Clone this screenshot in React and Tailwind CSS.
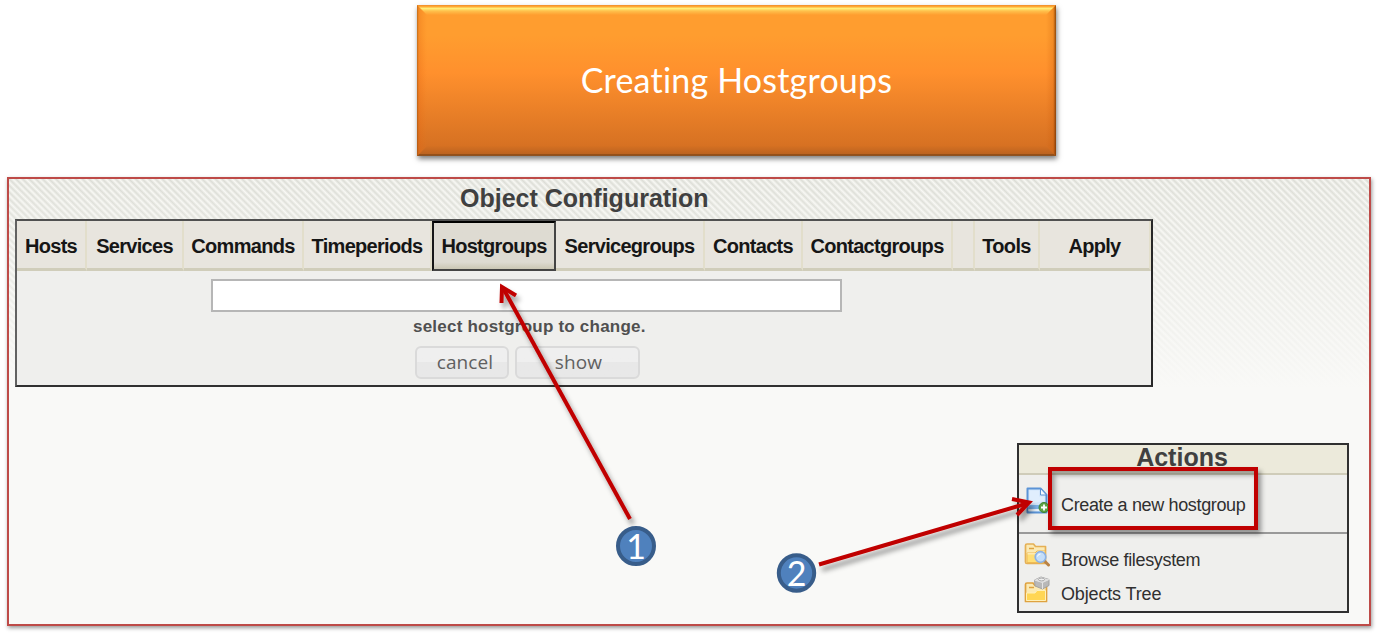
const tabs = [
  { label: 'Hosts', className: 'w-[70px]' },
  { label: 'Services', className: 'w-[97px]' },
  { label: 'Commands', className: 'w-[120px]' },
  { label: 'Timeperiods', className: 'w-[128px]' },
  { label: 'Hostgroups', className: 'w-[124px]', active: true },
  { label: 'Servicegroups', className: 'w-[149px]' },
  { label: 'Contacts', className: 'w-[98px]' },
  { label: 'Contactgroups', className: 'w-[150px]' },
  { label: '', className: 'w-[22px]' },
  { label: 'Tools', className: 'w-[65px]' },
  { label: 'Apply', className: 'w-[111px]' },
];

function Banner() {
  return (
    <div className="relative ml-[417px] h-[151px] w-[639px] bg-linear-to-b from-[#ff9d2f] from-20% via-[#ff902d] via-45% to-[#d57022] to-95% shadow-[1px_3px_5px_rgba(0,0,0,0.5)]">
      {/* bevelled edges */}
      <svg className="absolute inset-0" width="639" height="151">
        <defs>
          <linearGradient id="top" x1="0" y1="0" x2="0" y2="1">
            <stop offset="0" stopColor="#ee8a2a" />
            <stop offset="0.15" stopColor="#ffa834" />
            <stop offset="0.35" stopColor="#ffed78" />
            <stop offset="0.6" stopColor="#ffc04c" />
            <stop offset="1" stopColor="#ff9d2f" />
          </linearGradient>
          <linearGradient id="bottom" x1="0" y1="0" x2="0" y2="1">
            <stop offset="0" stopColor="#d57022" />
            <stop offset="0.75" stopColor="#bd6420" />
            <stop offset="0.9" stopColor="#814514" />
            <stop offset="1" stopColor="#9a6030" />
          </linearGradient>
          <linearGradient id="left">
            <stop offset="0" stopColor="#8a4200" stopOpacity="0.55" />
            <stop offset="0.2" stopColor="#e06010" stopOpacity="0.28" />
            <stop offset="1" stopColor="#f07010" stopOpacity="0" />
          </linearGradient>
          <linearGradient id="right">
            <stop offset="0" stopColor="#c04c00" stopOpacity="0" />
            <stop offset="0.7" stopColor="#c05000" stopOpacity="0.22" />
            <stop offset="0.9" stopColor="#7a3400" stopOpacity="0.6" />
            <stop offset="1" stopColor="#6b2d00" stopOpacity="0.75" />
          </linearGradient>
        </defs>
        <path d="M0 0H639L629 10H10Z" fill="url(#top)" />
        <path d="M0 151H639L629 141H10Z" fill="url(#bottom)" />
        <path d="M0 0L10 10V141L0 151Z" fill="url(#left)" />
        <path d="M639 0L629 10V141L639 151Z" fill="url(#right)" />
      </svg>
      <h1 className="relative pt-[51px] text-center font-['Lato'] text-[34px] leading-[48px] tracking-[0.2px] text-white">
        Creating Hostgroups
      </h1>
    </div>
  );
}

function PageAddIcon() {
  return (
    <svg width="27" height="28" viewBox="0 0 27 28" className="shrink-0">
      <path d="M2.5 1.5H15.5L21.5 8V25.5H2.5Z" fill="#d3e6fb" stroke="#5b93d6" strokeWidth="2" strokeLinejoin="round" />
      <path d="M4.5 3.5H14V9.5H19.5V14L4.5 17Z" fill="#e0eefd" />
      <path d="M15.5 1.5V8H21.5Z" fill="#f5faff" stroke="#5b93d6" strokeWidth="1" />
      <rect x="3.5" y="18" width="17" height="4" fill="#7cb4ec" />
      <path d="M3 23H20" stroke="#fff" />
      <circle cx="19" cy="20.5" r="5" fill="#5da345" stroke="#3d8430" />
      <path d="M19 17.5V23.5M16 20.5H22" stroke="#fff" strokeWidth="1.8" />
    </svg>
  );
}

function FolderBody() {
  return (
    <>
      <path d="M1.5 3.5Q1.5 2 3 2H9.5L11.5 4.5H21.5V21.5H3Q1.5 21.5 1.5 20Z" fill="#fbeab4" stroke="#e5b055" strokeWidth="1.7" strokeLinejoin="round" />
      <path d="M5 6.5H10" stroke="#dfa23f" strokeWidth="1.5" />
      <path d="M3 11H11L13 9H21V20.5H3Z" fill="#ffdf76" stroke="#efbb54" />
      <path d="M3.5 11.8H11.5L13.5 9.8H20.5" stroke="#fff6d5" fill="none" />
    </>
  );
}

function FolderSearchIcon() {
  return (
    <svg width="27" height="25" viewBox="0 0 27 25" className="shrink-0">
      <FolderBody />
      <path d="M20.5 19L24.5 23" stroke="#b98245" strokeWidth="3" strokeLinecap="round" />
      <circle cx="16.5" cy="15" r="5.3" fill="#c4def9" stroke="#8bb2e5" strokeWidth="1.7" />
      <path d="M13.5 14.5Q14 12 16.5 12" stroke="#fff" fill="none" />
    </svg>
  );
}

function FolderCubeIcon() {
  return (
    <svg width="27" height="28" viewBox="0 0 27 28" className="shrink-0">
      <g transform="translate(0 4)">
        <path d="M1.5 4.5Q1.5 3 3 3H9L11 5.5H22.5V21.5H1.5Z" fill="#fbeab4" stroke="#dfa23f" strokeWidth="1.7" strokeLinejoin="round" />
        <path d="M5 7.5H10" stroke="#dfa23f" strokeWidth="1.5" />
        <path d="M2.5 13H11L13 10.500H21.500V20.500H2.500Z" fill="#ffd654" stroke="#fff0b8" />
      </g>
      <path d="M10.5 4L17 1L25 3.5V9.5L18.500 13L11 10Z" fill="#b8b8b8" stroke="#a2a2a2" strokeLinejoin="round" />
      <path d="M10.5 4L17 1L25 3.5L18.5 6.5Z" fill="#dedede" />
      <path d="M18.5 6.5V13M10.5 4L18.5 6.5L25 3.5" stroke="#e4e4e4" fill="none" />
      <ellipse cx="17.5" cy="3.5" rx="3" ry="1.4" fill="#eee" stroke="#999" strokeWidth="0.8" />
    </svg>
  );
}

function ObjectTable() {
  return (
    <div className="ml-[6px] h-[168px] w-[1138px] border-2 border-t-[#505050] border-r-[#282828] border-b-[#303030] border-l-[#626262] bg-[#efefed]">
      <div className="flex h-[50px]">
        {tabs.map((tab, i) => (
          <div
            key={i}
            className={`flex shrink-0 items-center justify-center text-[20px] font-bold tracking-[-0.7px] text-[#161616] ${tab.className} ${
              tab.active
                ? 'border-2 border-t-black border-r-[#444] border-b-[#444] border-l-[#161616] bg-linear-to-b from-[#dedbd2] from-85% to-[#cbc7b4]'
                : 'border-r-2 border-b-[3px] border-r-[#e2decb] border-b-[#d0cdba] bg-[#e8e5de] pt-[3px]'
            }`}
          >
            <span className="whitespace-nowrap">{tab.label}</span>
          </div>
        ))}
      </div>
      <div className="ml-[194px] mt-[8px] h-[33px] w-[631px] border-2 border-[#b6b6b6] bg-white" />
      <p className="ml-[396px] mt-[3px] text-[17px] leading-6 font-bold tracking-[0.22px] whitespace-nowrap text-[#505050]">
        select hostgroup to change.
      </p>
      <div className="ml-[398px] mt-[7px] flex gap-[6px] font-['Open_Sans'] text-[19px] leading-[29px] text-[#606060]">
        <button className="h-[33px] w-[94px] rounded-md border-2 border-[#dadada] bg-linear-to-b from-[#efefef] from-50% to-[#e8e8e8] to-50% pl-[6px] tracking-[0.1px]">cancel</button>
        <button className="h-[33px] w-[125px] rounded-md border-2 border-[#dadada] bg-linear-to-b from-[#efefef] from-50% to-[#e8e8e8] to-50% pl-[2px] tracking-[0.1px]">show</button>
      </div>
    </div>
  );
}

function Actions() {
  return (
    <div className="ml-[1008px] mt-[56px] h-[170px] w-[332px] border-2 border-[#303030] bg-[#efefed] text-[18px] leading-[27px] tracking-[-0.35px] text-[#303030]">
      <h2 className="h-[30px] border-b-2 border-[#cfccb9] bg-[#eceadb] pr-[2px] text-center text-[25px] leading-[25px] font-bold tracking-normal text-[#404040]">
        Actions
      </h2>
      <div className="flex h-[59px] border-b-2 border-[#999] pl-[6px] pt-[12px]">
        <PageAddIcon />
        <span className="pl-[9px] pt-[5px]">Create a new hostgroup</span>
      </div>
      <div className="flex h-[34px] pl-[5px] pt-[8px]">
        <FolderSearchIcon />
        <span className="pl-[10px] pt-[5px]">Browse filesystem</span>
      </div>
      <div className="flex pl-[5px] pt-[8px] tracking-[-0.15px]">
        <FolderCubeIcon />
        <span className="pl-[10px] pt-[5px]">Objects Tree</span>
      </div>
    </div>
  );
}

// Callouts drawn over the panel: numbered steps, arrows and the highlight frame
function Annotations() {
  return (
    <>
      <svg className="pointer-events-none absolute inset-0" width="1378" height="636">
        <defs>
          <filter id="shadow" filterUnits="userSpaceOnUse" x="480" y="270" width="800" height="320">
            <feDropShadow dx="3" dy="5" stdDeviation="2.5" floodColor="#000" floodOpacity="0.4" />
          </filter>
        </defs>
        <g fill="none" stroke="#c00000" strokeWidth="4" filter="url(#shadow)">
          <path d="M630 519L503 288" />
          <path d="M501.500 303L502 287L516 295.500" />
          <path d="M819 564.500L1027 503.500" />
          <path d="M1012 499L1029 502.500L1017 515" />
        </g>
        <g fill="#4f81bd" stroke="#385d8a" strokeWidth="4">
          <circle cx="636" cy="546" r="18" />
          <circle cx="796.5" cy="573" r="17.7" />
        </g>
        <g fill="#fff" fontFamily="Lato" fontSize="34" textAnchor="middle">
          <text x="636" y="559">1</text>
          <text x="796.5" y="585.5">2</text>
        </g>
      </svg>
      <div className="absolute left-[1048px] top-[467px] h-[63px] w-[210px] border-4 border-[#c00000] shadow-[3px_4px_5px_rgba(0,0,0,0.4),inset_3px_4px_5px_rgba(0,0,0,0.35)]" />
    </>
  );
}

export default function App() {
  return (
    <div className="relative h-[636px] w-[1378px] overflow-hidden bg-white pt-[5px] font-['Liberation_Sans',sans-serif]">
      <Banner />
      <div className="ml-[7px] mt-[21px] h-[449px] w-[1364px] border-2 border-[#be4b48] bg-[linear-gradient(to_bottom,#f9f9f700,#f9f9f7_210px),repeating-linear-gradient(45deg,#dcddd6_0px,#f8f8f4_2.4px,#dcddd6_4.7px)] shadow-[1px_2px_4px_rgba(0,0,0,0.4)]">
        <h2 className="h-[40px] pl-[451px] text-[25px] leading-[38px] font-bold text-[#404040]">Object Configuration</h2>
        <ObjectTable />
        <Actions />
      </div>
      <Annotations />
    </div>
  );
}
